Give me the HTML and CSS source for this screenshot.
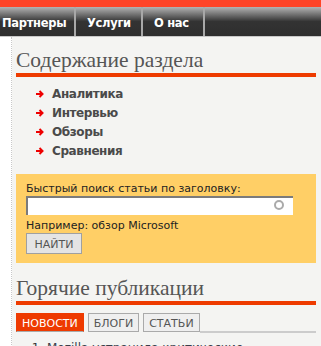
FILE: index.html
```html
<!DOCTYPE html>
<html lang="ru">
<head>
    <meta charset="UTF-8">
    <title>Содержание раздела</title>
    <link rel="stylesheet" href="styles.css">
</head>
<body>
    <div class="topbar"></div>
    <div class="nav">
        <a href="#" class="nav-item">Партнеры</a>
        <a href="#" class="nav-item">Услуги</a>
        <a href="#" class="nav-item">О нас</a>
    </div>

    <div class="page">
        <div class="side"></div>
        <div class="main">
            <!-- Содержание раздела -->
            <h2 class="block-title">Содержание раздела</h2>
            <ul class="section-list">
                <li><svg class="arrow" width="8" height="8" viewBox="0 0 8 8"><path d="M0 4H6M3.5 1L6.5 4L3.5 7" /></svg><a href="#">Аналитика</a></li>
                <li><svg class="arrow" width="8" height="8" viewBox="0 0 8 8"><path d="M0 4H6M3.5 1L6.5 4L3.5 7" /></svg><a href="#">Интервью</a></li>
                <li><svg class="arrow" width="8" height="8" viewBox="0 0 8 8"><path d="M0 4H6M3.5 1L6.5 4L3.5 7" /></svg><a href="#">Обзоры</a></li>
                <li><svg class="arrow" width="8" height="8" viewBox="0 0 8 8"><path d="M0 4H6M3.5 1L6.5 4L3.5 7" /></svg><a href="#">Сравнения</a></li>
            </ul>

            <!-- Поиск -->
            <div class="search-box">
                <div class="search-label">Быстрый поиск статьи по заголовку:</div>
                <div class="search-field">
                    <input type="text" class="search-input">
                    <span class="search-ring"></span>
                </div>
                <div class="search-hint">Например: обзор Microsoft</div>
                <button class="search-button">НАЙТИ</button>
            </div>

            <!-- Горячие публикации -->
            <h2 class="block-title hot">Горячие публикации</h2>
            <div class="tabs">
                <span class="tab active">НОВОСТИ</span>
                <span class="tab">БЛОГИ</span>
                <span class="tab">СТАТЬИ</span>
                <span class="tab-line"></span>
            </div>
            <ol class="news-list">
                <li><a href="#">Mozilla устранила критические</a></li>
            </ol>
        </div>
    </div>
</body>
</html>
```

FILE: styles.css
```css
body {
    margin: 0;
    background-color: #f4f4f2;
    font-family: "DejaVu Sans", Verdana, sans-serif;
    overflow: hidden;
}
.topbar {
    height: 7px;
    background-color: #ff4427;
}
.nav {
    display: flex;
    height: 29px;
    background: linear-gradient(to bottom, #b4b4b4 0%, #5a5a5a 35%, #333 50%, #2e2e2e 100%);
    border-bottom: 1px solid #c8c8c8;
}
.nav-item {
    display: flex;
    align-items: center;
    box-sizing: border-box;
    padding-top: 2px;
    color: #fff;
    font-weight: bold;
    font-size: 11.5px;
    letter-spacing: -0.3px;
    text-decoration: none;
    border-right: 2px solid #a8a8a8;
}
.nav-item:nth-child(1) {
    width: 76px;
    padding-left: 2px;
}
.nav-item:nth-child(2) {
    width: 67px;
    padding-left: 11px;
}
.nav-item:nth-child(3) {
    width: 62px;
    padding-left: 11px;
}
.page {
    display: flex;
}
.side {
    width: 11px;
    min-height: 320px;
    background: #fff;
    border-right: 1px dotted #c8c8c8;
}
.main {
    width: 300px;
    padding: 0 5px 0 4px;
}
.block-title {
    margin: 11px 0 0 0;
    font-family: "Liberation Serif", "DejaVu Serif", serif;
    font-weight: normal;
    font-size: 21.5px;
    line-height: 24px;
    color: #555;
    padding-bottom: 1px;
    border-bottom: 4px solid #ee3b00;
}
.section-list {
    list-style: none;
    margin: 7px 0 0 0;
    padding: 0 0 0 20px;
}
.section-list li {
    display: flex;
    align-items: center;
    height: 19px;
    font-size: 12px;
    font-weight: bold;
    letter-spacing: -0.4px;
}
.section-list a {
    color: #4a4a4a;
    text-decoration: none;
}
.arrow {
    margin-right: 8px;
    fill: none;
    stroke: #e00;
    stroke-width: 2;
}
.search-box {
    margin-top: 14px;
    background-color: #ffcf66;
    padding: 8px 10px 9px 10px;
    font-size: 11px;
    color: #222;
}
.search-label {
    line-height: 14px;
}
.search-field {
    position: relative;
    width: 267px;
}
.search-input {
    display: block;
    width: 267px;
    height: 19px;
    box-sizing: border-box;
    border: none;
    border-top: 2px solid #7b7b7b;
    border-left: 2px solid #7b7b7b;
    background: #fff;
    margin: 0;
    padding: 0;
}
.search-ring {
    position: absolute;
    right: 9px;
    top: 4px;
    width: 6px;
    height: 6px;
    border: 2px solid #aaa;
    border-radius: 50%;
}
.search-hint {
    margin-top: 4px;
    line-height: 14px;
}
.search-button {
    display: block;
    width: 56px;
    height: 21px;
    padding: 1px 0 0 0;
    background-color: #e4e4e4;
    border: 1px solid #a0a0a0;
    color: #555;
    font-family: "DejaVu Sans", Verdana, sans-serif;
    font-size: 11px;
}
.block-title.hot {
    margin-top: 13px;
}
.tabs {
    display: flex;
    align-items: flex-end;
    margin-top: 8px;
}
.tab {
    line-height: 14px;
    padding: 3px 5px 0 5px;
    margin-right: 4px;
    background-color: #efefef;
    border: 1px solid #aaa;
    color: #555;
    font-size: 11px;
}
.tab.active {
    background-color: #ee3a00;
    border-color: #ee3a00 #ee3a00 #aaa #ee3a00;
    color: #fff;
}
.tab-line {
    flex: 1;
    height: 2px;
    margin-left: -4px;
    margin-bottom: -1px;
    background-color: #ccc;
}
.news-list {
    margin: 8px 0 0 0;
    padding-left: 31px;
    font-size: 12px;
    line-height: 16px;
    color: #333;
}
.news-list a {
    color: #3a3f4a;
    text-decoration: none;
}
```
